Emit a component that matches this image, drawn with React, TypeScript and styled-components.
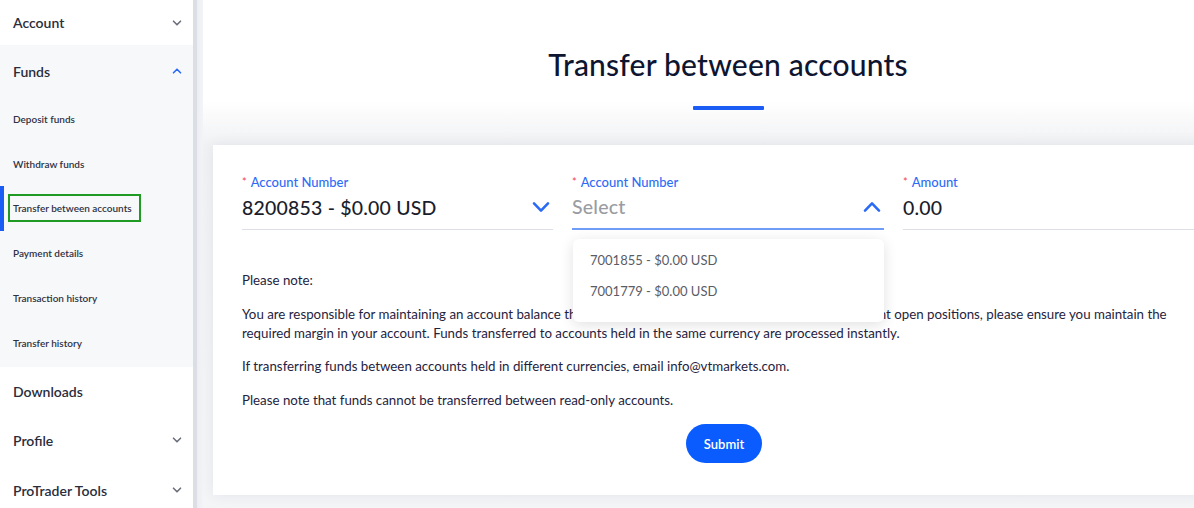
import React, { FC } from 'react'
import styled, { createGlobalStyle } from 'styled-components'

const GlobalStyle = createGlobalStyle`
  html, body {
    margin: 0;
    padding: 0;
    overflow: hidden;
    background: #ffffff;
  }
  * {
    box-sizing: border-box;
  }
  body {
    font-family: Lato, "Noto Sans", "Liberation Sans", sans-serif;
    color: #1c2033;
  }
`

const Chevron: FC<{ up?: boolean; color?: string; size?: number; stroke?: number }> = ({
  up,
  color = '#6b6f7b',
  size = 10,
  stroke = 1.6,
}) => (
  <svg width={size} height={size} viewBox="0 0 10 10" fill="none">
    <path
      d={up ? 'M1.5 6.8 L5 3.2 L8.5 6.8' : 'M1.5 3.2 L5 6.8 L8.5 3.2'}
      stroke={color}
      strokeWidth={stroke}
      strokeLinecap="round"
      strokeLinejoin="round"
    />
  </svg>
)

const subItems = [
  'Deposit funds',
  'Withdraw funds',
  'Transfer between accounts',
  'Payment details',
  'Transaction history',
  'Transfer history',
]

const App: FC = () => {
  return (
    <>
      <GlobalStyle />
      <Page>
        <Sidebar>
          <MenuRow height={45}>
            <span>Account</span>
            <Chevron />
          </MenuRow>
          <Group>
            <MenuRow height={52}>
              <span>Funds</span>
              <Chevron up color="#2a6af5" />
            </MenuRow>
            {subItems.map((item) => (
              <SubRow key={item} active={item === 'Transfer between accounts'}>
                <SubLabel highlighted={item === 'Transfer between accounts'}>{item}</SubLabel>
              </SubRow>
            ))}
          </Group>
          <MenuRow height={48}>
            <span>Downloads</span>
          </MenuRow>
          <MenuRow height={50}>
            <span>Profile</span>
            <Chevron />
          </MenuRow>
          <MenuRow height={50}>
            <span>ProTrader Tools</span>
            <Chevron />
          </MenuRow>
        </Sidebar>
        <Gutter />
        <Main>
          <Title>Transfer between accounts</Title>
          <TitleBar />
          <Card>
            <Fields>
              <Field>
                <Label>
                  <Star>*</Star>Account Number
                </Label>
                <Control>
                  <Value>8200853 - $0.00 USD</Value>
                  <Chevron color="#2a6af5" size={20} stroke={1.3} />
                </Control>
              </Field>
              <Field>
                <Label>
                  <Star>*</Star>Account Number
                </Label>
                <Control focused>
                  <Value placeholder>Select</Value>
                  <Chevron up color="#2a6af5" size={20} stroke={1.3} />
                </Control>
                <Dropdown>
                  <Option>7001855 - $0.00 USD</Option>
                  <Option>7001779 - $0.00 USD</Option>
                </Dropdown>
              </Field>
              <Field>
                <Label>
                  <Star>*</Star>Amount
                </Label>
                <Control>
                  <Value>0.00</Value>
                </Control>
              </Field>
            </Fields>
            <Notes>
              <p>Please note:</p>
              <p>
                You are responsible for maintaining an account balance that is sufficient to cover the margins for all your current open positions, please ensure you maintain the
                <br />
                required margin in your account. Funds transferred to accounts held in the same currency are processed instantly.
              </p>
              <p>If transferring funds between accounts held in different currencies, email info@vtmarkets.com.</p>
              <p>Please note that funds cannot be transferred between read-only accounts.</p>
            </Notes>
            <SubmitButton>Submit</SubmitButton>
          </Card>
        </Main>
      </Page>
    </>
  )
}

export default App

interface MenuRowProps {
  height: number
}
interface SubRowProps {
  active?: boolean
}
interface SubLabelProps {
  highlighted?: boolean
}
interface ControlProps {
  focused?: boolean
}
interface ValueProps {
  placeholder?: boolean
}

const Page = styled.div`
  display: flex;
  width: 1194px;
  height: 508px;
  overflow: hidden;
  background: #f4f5f7;
`

const Sidebar = styled.nav`
  width: 193px;
  flex-shrink: 0;
  background: #ffffff;
  display: flex;
  flex-direction: column;
`

const Gutter = styled.div`
  width: 10px;
  flex-shrink: 0;
  background: linear-gradient(to right, #dcdee5 0, #dcdee5 4px, #eceef2 4px, #f3f4f7 10px);
`

const MenuRow = styled.div<MenuRowProps>`
  height: ${(props) => props.height}px;
  flex-shrink: 0;
  padding: 0 11px 0 13px;
  display: flex;
  align-items: center;
  justify-content: space-between;
  font-size: 14px;
  font-weight: 600;
  color: #2a2d3b;
`

const Group = styled.div`
  background: #f7f8fa;
  padding-bottom: 2px;
`

const SubRow = styled.div<SubRowProps>`
  height: 44.7px;
  display: flex;
  align-items: center;
  border-left: 4px solid ${(props) => (props.active ? '#1b5cf5' : 'transparent')};
  padding-left: 9px;
`

const SubLabel = styled.span<SubLabelProps>`
  font-size: 10px;
  font-weight: 600;
  color: #2f3242;
  ${(props) =>
    props.highlighted &&
    `
    border: 2px solid #1f9a22;
    padding: 6px 7px 6px 3px;
    margin-left: -5px;
    margin-top: -1px;
  `}
`

const Main = styled.main`
  width: 1050px;
  flex-shrink: 0;
  display: flex;
  flex-direction: column;
  align-items: center;
  background: linear-gradient(to bottom, #ffffff 0, #ffffff 100px, #f1f2f4 145px, #f4f5f7 100%);
`

const Title = styled.h1`
  margin: 46px 0 0;
  font-size: 30px;
  font-weight: 500;
  color: #0e1530;
  line-height: 36px;
  letter-spacing: 0.2px;
`

const TitleBar = styled.div`
  width: 71px;
  height: 4px;
  margin-top: 24px;
  background: #1b5cf5;
  border-radius: 1px;
`

const Card = styled.section`
  align-self: stretch;
  margin: 35px 0 0 10px;
  height: 350px;
  background: #ffffff;
  box-shadow: 0 0 14px rgba(20, 30, 60, 0.07);
  padding: 29px 0 0 29px;
  display: flex;
  flex-direction: column;
`

const Fields = styled.div`
  display: grid;
  grid-template-columns: 311px 312px 311px;
  column-gap: 19px;
`

const Field = styled.div`
  position: relative;
  display: flex;
  flex-direction: column;
`

const Label = styled.label`
  font-size: 13px;
  font-weight: 500;
  color: #2d6cf6;
  line-height: 15px;
`

const Star = styled.span`
  color: #f2475a;
  font-size: 11px;
  margin-right: 4px;
  vertical-align: 1px;
`

const Control = styled.div<ControlProps>`
  height: 40px;
  display: flex;
  align-items: center;
  justify-content: space-between;
  padding: 0 2px 5px 0;
  border-bottom: ${(props) => (props.focused ? '2px solid #6f9cf7' : '1px solid #dcdfe6')};
  margin-bottom: ${(props) => (props.focused ? '0' : '1px')};
`

const Value = styled.span<ValueProps>`
  font-size: 19.5px;
  font-weight: 500;
  letter-spacing: 0.2px;
  color: ${(props) => (props.placeholder ? '#9a9ca3' : '#1a1d2c')};
`

const Dropdown = styled.ul`
  position: absolute;
  top: 65px;
  left: 1px;
  right: 0;
  margin: 0;
  padding: 5px 0 16px;
  list-style: none;
  background: #ffffff;
  border-radius: 6px;
  box-shadow: 0 3px 14px rgba(0, 0, 0, 0.12);
  z-index: 2;
`

const Option = styled.li`
  height: 31px;
  display: flex;
  align-items: center;
  padding-left: 17px;
  font-size: 13px;
  color: #5a5c66;
`

const Notes = styled.div`
  width: 980px;
  margin-top: 40px;
  font-size: 13.3px;
  line-height: 19px;
  color: #1f2340;
  p {
    margin: 0 0 14.5px;
  }
`

const SubmitButton = styled.button`
  align-self: center;
  margin: 0 0 0 -47px;
  width: 76px;
  height: 39px;
  border: none;
  border-radius: 20px;
  background: #0a5cff;
  color: #ffffff;
  font-family: inherit;
  font-size: 13px;
  font-weight: 600;
  cursor: pointer;
`
